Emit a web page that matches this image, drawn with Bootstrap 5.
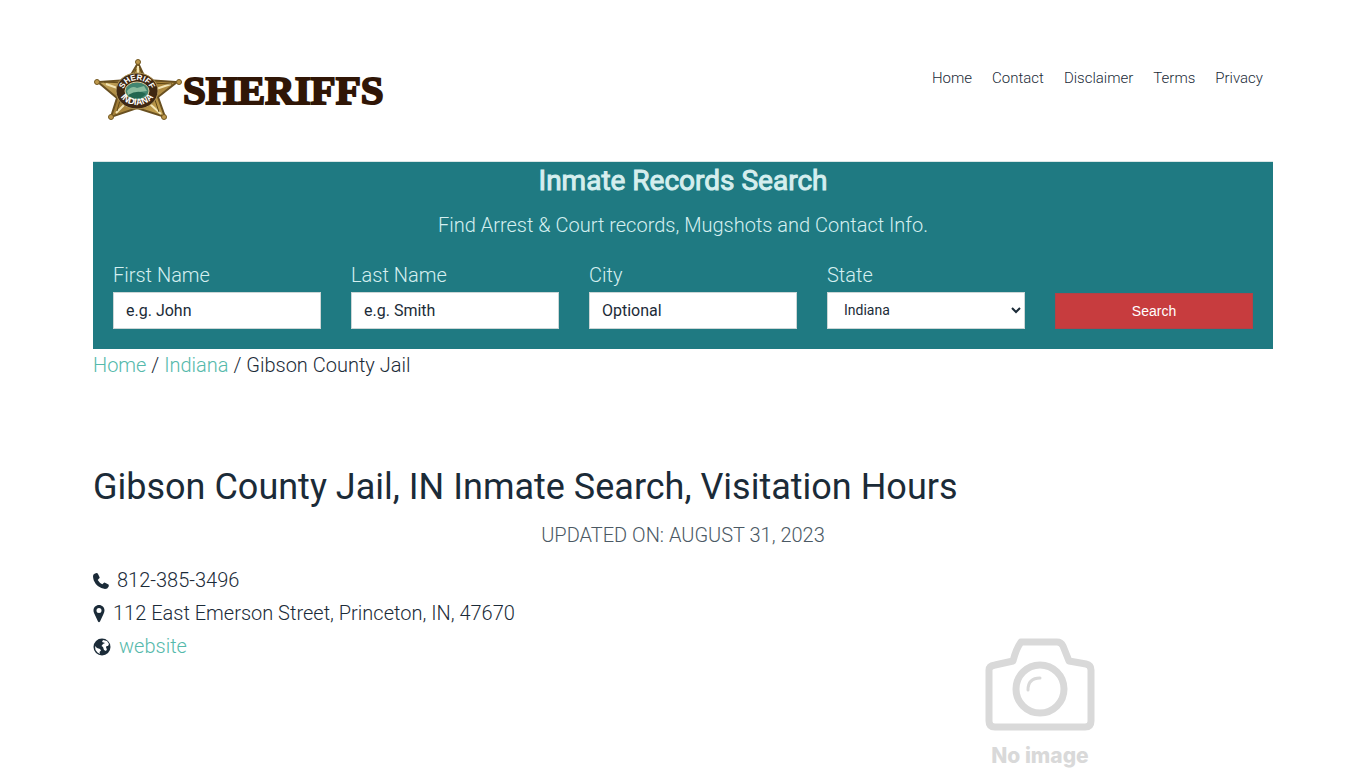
<!DOCTYPE html>
<html lang="en">
<head>
<meta charset="utf-8">
<meta name="viewport" content="width=device-width, initial-scale=1">
<title>Gibson County Jail, IN Inmate Search, Visitation Hours</title>
<link rel="stylesheet" href="https://cdn.jsdelivr.net/npm/bootstrap@5.3.0/dist/css/bootstrap.min.css">
<style>
body{font-family:Roboto,"Liberation Sans",sans-serif;font-weight:300;font-size:20px;line-height:34px;color:#1b2b38}
a{color:#55b9ab;text-decoration:none}
.page-wrap{max-width:1180px}
.site-header{padding:54px 0 35px}
.site-logo{color:#301606;height:72px}
.site-logo svg{width:90px;height:70px}
.logo-word{font-family:"Liberation Serif",serif;font-weight:700;font-size:41px;line-height:70px;-webkit-text-stroke:2px #301606}
.site-nav{font-size:15px;line-height:24px;gap:20px;padding-right:10px;padding-top:12px}
.site-nav a{color:#1b2b38;padding:0}
.search-panel{background:#1f7a82;color:#d5eff0;padding:0 20px 20px;border-top:1px solid #d9e6e6}
.search-panel h2{font-size:28px;line-height:38px;font-weight:400;margin:0;color:#d5eeee;-webkit-text-stroke:1px #d5eeee}
.search-panel p{line-height:30px;margin:10px 0 20px}
.search-grid{display:grid;gap:20px}
.search-grid label{line-height:30px;display:block;margin-bottom:2px}
.search-grid .form-control,.search-grid select{display:block;width:100%;height:37px;border:1px solid #ccd6d6;border-radius:0;background:#fff;color:#1b2b38;font-size:16px;font-weight:400;padding:6px 12px}
.search-grid .form-control::placeholder{color:#1b2b38;opacity:1}
.search-grid select{font-size:14px;padding:6px 0 8px 12px}
.search-grid .btn{height:36px;border-radius:0;background:#c73c3e;border:1px solid #b04247;color:#fff;font:14px "Liberation Sans",sans-serif}
@media (min-width:992px){.search-grid{grid-template-columns:208fr 208fr 208fr 198fr 198fr;gap:30px}}
.crumbs{line-height:32px;margin-bottom:80px}
h1{font-size:36px;line-height:50px;font-weight:400;margin:0;padding-top:1px}
.updated{line-height:34px;margin:6px 0 12px;color:#4b5964}
.contact-list{margin:0}
.contact-list svg{height:18px;fill:#1b2b38}
.contact-list li{display:flex;align-items:center;gap:8px;line-height:33px}
.photo-box{width:110px;margin-right:178px;margin-top:-25px;color:#d9d9d9;text-align:center}
.photo-box figcaption{font:800 21px/24px Inter,sans-serif;white-space:nowrap;margin:12px -10px 0}
.photo-box svg{display:block;width:110px;height:94px}
</style>
<script src="https://cdn.jsdelivr.net/npm/bootstrap@5.3.0/dist/js/bootstrap.bundle.min.js"></script>
</head>
<body>
<div class="container page-wrap p-0">
<header class="site-header d-flex flex-wrap justify-content-between align-items-start">
<a href="#" class="site-logo d-flex align-items-center" aria-label="Sheriffs home">
<svg viewBox="0 0 90 70" role="img" aria-label="Star badge">
<defs><linearGradient id="gold" x2="1" y2="1"><stop stop-color="#dfc679"/><stop offset=".5" stop-color="#a07b35"/><stop offset="1" stop-color="#d1af59"/></linearGradient>
<path id="arcTop" d="M30 38A14 13 0 0 1 58 38"/><path id="arcLow" d="M25 34A19 16 0 0 0 63 34"/></defs>
<path d="M45 8 53 25 84 27 65 42 72 62 44 53 18 62 24 43 5 27 35 25Z" fill="url(#gold)" stroke="#695021" stroke-width="2"/>
<path d="M45 11V22M13 29 27 34M78 29 63 34M23 58 32 49M68 59 57 49" stroke="#f3e5b5" stroke-width="2"/>
<path d="M43 14 38 27M47 14 52 27M11 27 32 28M79 29 57 28M24 56 28 42M66 57 61 42" stroke="#604817" fill="none"/>
<g fill="#bd984d" stroke="#735821"><circle cx="45" cy="7" r="2.500"/><circle cx="4" cy="27" r="2.500"/><circle cx="86" cy="27" r="2.500"/><circle cx="18" cy="62" r="2.500"/><circle cx="71" cy="62" r="2.500"/></g>
<ellipse cx="44" cy="36" rx="21" ry="18" fill="#3f2812" stroke="#b29859"/>
<ellipse cx="44" cy="36" rx="12" ry="9" fill="#428570" stroke="#d9c99b"/>
<path d="M34 36q5-6 10-3l7-2 3 5-8 1-5 4-6-1z" fill="#8abb9d"/><path d="M35 40q10-6 18-1l-5 4h-9z" fill="#23664f"/>
<g fill="#fff" font-family="Liberation Sans,sans-serif" font-weight="700" text-anchor="middle"><text font-size="8"><textPath href="#arcTop" startOffset="50%">SHERIFF</textPath></text><text font-size="9"><textPath href="#arcLow" startOffset="50%">INDIANA</textPath></text></g>
</svg><span class="logo-word">SHERIFFS</span></a>
<nav class="nav site-nav" aria-label="Main"><a class="nav-link" href="#">Home</a><a class="nav-link" href="#">Contact</a><a class="nav-link" href="#">Disclaimer</a><a class="nav-link" href="#">Terms</a><a class="nav-link" href="#">Privacy</a></nav>
</header>
<main>
<section class="search-panel">
<div class="text-center"><h2>Inmate Records Search</h2><p>Find Arrest &amp; Court records, Mugshots and Contact Info.</p></div>
<form class="search-grid align-items-end">
<div><label for="first">First Name</label><input id="first" class="form-control" type="text" placeholder="e.g. John"></div>
<div><label for="last">Last Name</label><input id="last" class="form-control" type="text" placeholder="e.g. Smith"></div>
<div><label for="city">City</label><input id="city" class="form-control" type="text" placeholder="Optional"></div>
<div><label for="state">State</label><select id="state"><option>Indiana</option></select></div>
<button type="submit" class="btn">Search</button>
</form>
</section>
<nav class="crumbs" aria-label="Breadcrumb"><a href="#">Home</a> / <a href="#">Indiana</a> / Gibson County Jail</nav>
<h1>Gibson County Jail, IN Inmate Search, Visitation Hours</h1>
<p class="updated text-center">UPDATED ON: AUGUST 31, 2023</p>
<ul class="contact-list list-unstyled">
<li><svg width="16" viewBox="0 0 16 18"><path d="M0 4Q0 2 2 1.500L3.800 1Q4.500 1 5 2L6.500 5Q7 6 6 6.500L4.700 8Q6.500 11 9.300 12.300L11 10.700Q11.500 10.300 12.500 11L15.500 12.500Q16 13 15.700 14.500Q14.500 17 12 17Q4 16 .8 8.500Q0 6 0 4Z"/></svg>812-385-3496</li>
<li><svg width="12" viewBox="0 0 12 18"><path fill-rule="evenodd" d="M6 0C3 0 .5 2.300.5 5.300.5 7 1 8 1.500 9L5 16.500Q6 18 7 16.500L10.500 9Q11.500 7 11.500 5.300C11.500 2.300 9 0 6 0ZM6 3A2.500 2.500 0 1 1 6 8 2.500 2.500 0 1 1 6 3Z"/></svg>112 East Emerson Street, Princeton, IN, 47670</li>
<li><svg width="18" viewBox="0 0 18 18"><circle cx="9" cy="9" r="8.500"/><path fill="#fff" d="M10 2 14 3 16 6 15 8 13.500 8 13 10 14 11 13 13 11 12 10 9 8.500 8 10 6 12 5 9 4ZM2 8 4 10 7 11 8 12.500 6.500 14 7 16 4.500 14.500 2.500 12Z"/></svg><a href="#">website</a></li>
</ul>
<figure class="photo-box ms-auto"><svg viewBox="0 0 110 94" fill="none" stroke="#d9d9d9" stroke-linejoin="round" stroke-linecap="round"><path stroke-width="7" d="M10 27 28 23Q31 11 36 4Q38 4 41 4H72Q76 4 78 8L84 23 101 26Q106 27 106 32V83Q106 89 100 89H10Q4 89 4 83V32Q4 28 10 27Z"/><circle cx="55" cy="51" r="24" stroke-width="7"/><path stroke-width="3" d="M43 52Q43 40 55 40"/></svg><figcaption>No image</figcaption></figure>
</main>
</div>
</body>
</html>
